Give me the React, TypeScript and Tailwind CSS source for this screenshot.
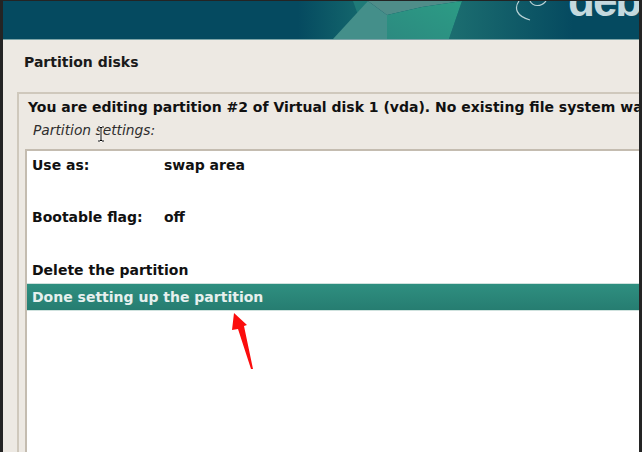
export default function App() {
  return (
    <div className="w-[642px] h-[452px] overflow-hidden bg-[#242424] pt-px pl-[3px] pr-[3px] font-['DejaVu_Sans',sans-serif]">
      <div className="w-[636px] h-[451px] bg-[#ede9e3] flex flex-col overflow-hidden">
        <div className="relative h-[39px] shrink-0 bg-[#054a60] border-b border-[#7ea5a8] overflow-hidden">
          <svg className="absolute left-0 top-0" width="636" height="38" viewBox="0 0 636 38">
            <defs>
              <linearGradient id="l" x1="0" x2="1" y1="0" y2="0">
                <stop offset="0" stopColor="#054a60" />
                <stop offset="1" stopColor="#156a6e" />
              </linearGradient>
              <linearGradient id="r" x1="0" x2="1" y1="0" y2="0">
                <stop offset="0" stopColor="#1c6e70" />
                <stop offset="1" stopColor="#054a60" />
              </linearGradient>
              <linearGradient id="g" x1="0" x2="1" y1="1" y2="0">
                <stop offset="0" stopColor="#2c8a80" />
                <stop offset="1" stopColor="#2c9c85" />
              </linearGradient>
            </defs>
            <rect x="295" y="0" width="70" height="38" fill="url(#l)" />
            <polygon points="350,0 365,0 355,14" fill="#1f7a78" />
            <polygon points="446,38 459,0 570,0 570,38" fill="url(#r)" />
            <polygon points="330,38 365,0 384,14 384,38" fill="#448f8a" />
            <polygon points="365,0 459,0 419,6 384,14" fill="#4f8d89" />
            <polygon points="384,14 419,6 459,0 446,38 384,38" fill="url(#g)" />
            <path d="M516 0 C511 7 513 15 527 19" stroke="#b9d2d6" strokeWidth="1.2" fill="none" />
            <path d="M527 0 C530 6 538 6 543 0" stroke="#b9d2d6" strokeWidth="1.2" fill="none" />
          </svg>
          <span className="absolute left-[565px] top-[-22px] text-[44px] leading-[44px] tracking-[-2px] font-bold text-[#c5d9de] font-['Liberation_Sans',sans-serif]">
            deb
          </span>
        </div>
        <h1 className="ml-[21px] mt-[14px] text-[14px] leading-[16px] font-bold text-[#1a1a1a]">Partition disks</h1>
        <div className="ml-[14px] mt-[22px] flex-1 w-[640px] border-2 border-[#cfc8bc] border-b-0 pt-[4px] pl-[9px] flex flex-col">
          <p className="whitespace-nowrap text-[14px] leading-[18px] font-bold text-[#111]">
            You are editing partition #2 of Virtual disk 1 (vda). No existing file system was detected
          </p>
          <div className="relative">
            <p className="ml-[5px] mt-[6px] text-[13.8px] leading-[16px] italic text-[#2e2e2e]">Partition settings:</p>
            <svg className="absolute left-[68px] top-[10px]" width="10" height="16" viewBox="0 0 10 16">
              <path d="M2 1h2l1 1 1-1h2M5 2v12M2 15h2l1-1 1 1h2" stroke="#fff" strokeWidth="2.5" fill="none" />
              <path d="M2 1h2l1 1 1-1h2M5 2v12M2 15h2l1-1 1 1h2" stroke="#000" strokeWidth="1" fill="none" />
            </svg>
          </div>
          <div className="relative mt-[11px] flex-1 -ml-[3px] bg-white border-2 border-[#c4bcb0] border-r-0 border-b-0 text-[14px] font-bold text-[#111]">
            <div className="h-[52px] pl-[5px] pt-[5px] leading-[18px] flex">
              <span className="w-[132px]">Use as:</span>
              <span>swap area</span>
            </div>
            <div className="h-[53px] pl-[5px] pt-[5px] leading-[18px] flex">
              <span className="w-[132px]">Bootable flag:</span>
              <span>off</span>
            </div>
            <div className="h-[27px] pl-[5px] pt-[5px] leading-[18px]">Delete the partition</div>
            <div className="h-[28px] pl-[5px] leading-[26px] text-[#e6f0ee] bg-gradient-to-b from-[#2f8f80] to-[#267d71] border-y border-[#cfe2de]">
              Done setting up the partition
            </div>
            <svg className="absolute left-[199px] top-[159px]" width="30" height="62" viewBox="0 0 30 62">
              <polygon points="8,3 21,15 18,16 27,59 25,59 12,19 6,20" fill="#fb0d0d" />
            </svg>
          </div>
        </div>
      </div>
    </div>
  );
}
